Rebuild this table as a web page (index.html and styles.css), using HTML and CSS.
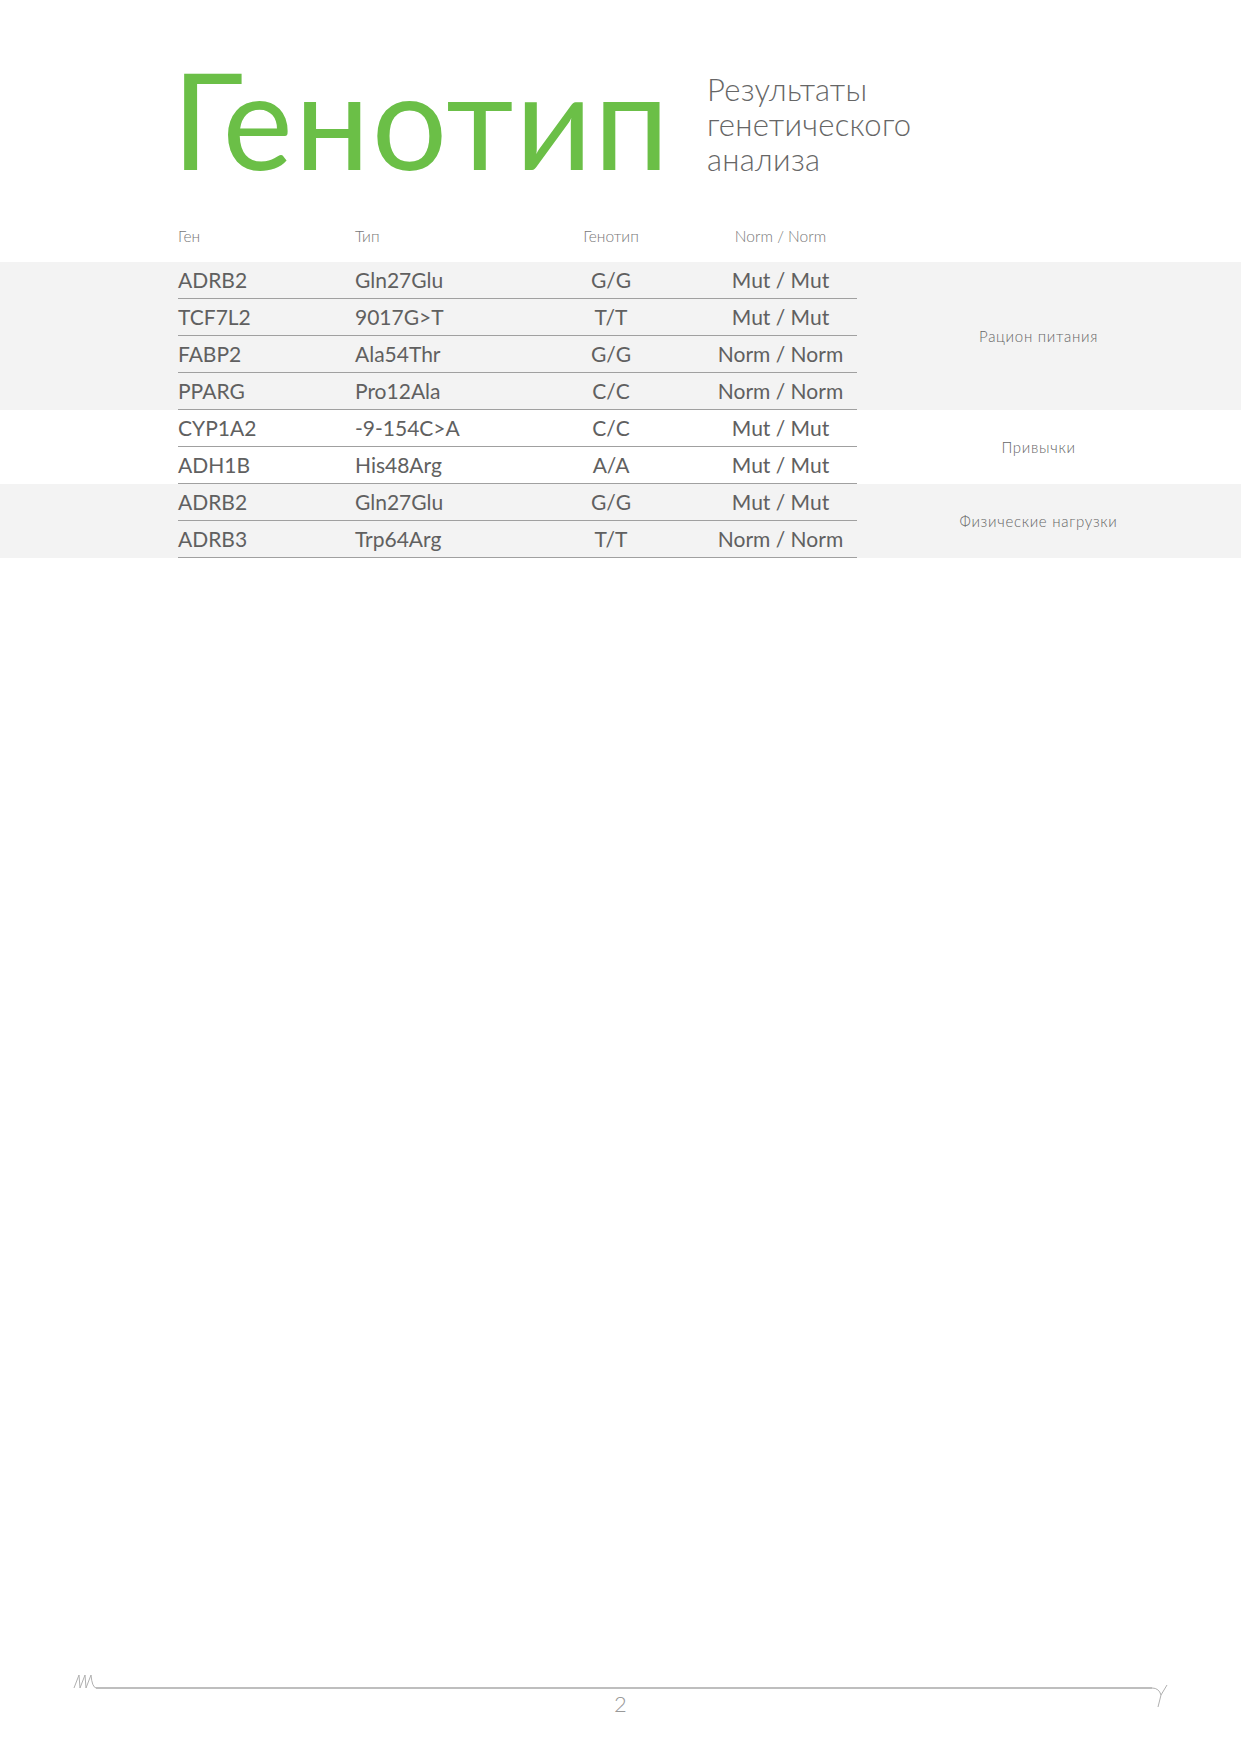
FILE: index.html
```html
<!DOCTYPE html>
<html lang="ru">
<head>
    <meta charset="UTF-8">
    <meta name="viewport" content="width=device-width, initial-scale=1.0">
    <title>Генотип</title>
    <link rel="stylesheet" href="styles.css">
</head>
<body>
    <header class="head">
        <h1 class="title">Генотип</h1>
        <p class="subtitle">Результаты<br>генетического<br>анализа</p>
    </header>

    <section class="table">
        <div class="table-head">
            <span>Ген</span>
            <span>Тип</span>
            <span class="center">Генотип</span>
            <span class="center">Norm / Norm</span>
        </div>

        <div class="group shaded">
            <div class="rows">
                <div class="row"><span>ADRB2</span><span>Gln27Glu</span><span class="center">G/G</span><span class="center">Mut / Mut</span></div>
                <div class="row"><span>TCF7L2</span><span>9017G&gt;T</span><span class="center">T/T</span><span class="center">Mut / Mut</span></div>
                <div class="row"><span>FABP2</span><span>Ala54Thr</span><span class="center">G/G</span><span class="center">Norm / Norm</span></div>
                <div class="row"><span>PPARG</span><span>Pro12Ala</span><span class="center">C/C</span><span class="center">Norm / Norm</span></div>
            </div>
            <div class="category">Рацион питания</div>
        </div>

        <div class="group">
            <div class="rows">
                <div class="row"><span>CYP1A2</span><span>-9-154C&gt;A</span><span class="center">C/C</span><span class="center">Mut / Mut</span></div>
                <div class="row"><span>ADH1B</span><span>His48Arg</span><span class="center">A/A</span><span class="center">Mut / Mut</span></div>
            </div>
            <div class="category">Привычки</div>
        </div>

        <div class="group shaded">
            <div class="rows">
                <div class="row"><span>ADRB2</span><span>Gln27Glu</span><span class="center">G/G</span><span class="center">Mut / Mut</span></div>
                <div class="row"><span>ADRB3</span><span>Trp64Arg</span><span class="center">T/T</span><span class="center">Norm / Norm</span></div>
            </div>
            <div class="category">Физические нагрузки</div>
        </div>
    </section>

    <footer class="foot">
        <svg class="foot-line" width="1241" height="45" viewBox="0 0 1241 45">
            <!-- left scribble -->
            <path d="M74 22 L79 9 L80 22 L85 9 L86 22 L91 9 Q92 21 96 22" fill="none" stroke="#b0b0b0" stroke-width="1"/>
            <line x1="96" y1="22" x2="1152" y2="22" stroke="#a9a9a9" stroke-width="1.5"/>
            <!-- right curl -->
            <path d="M1152 22 Q1159 22 1161 29 L1158 41 M1161 29 L1167 19" fill="none" stroke="#b0b0b0" stroke-width="1"/>
        </svg>
        <div class="page-num">2</div>
    </footer>
</body>
</html>
```

FILE: styles.css
```css
body {
    margin: 0;
    width: 1241px;
    min-height: 1754px;
    display: flex;
    flex-direction: column;
    font-family: "Lato", "Open Sans", sans-serif;
    color: #5a5a5a;
    background-color: #fff;
}
.head {
    display: flex;
    align-items: flex-start;
    padding: 52px 0 0 172px;
}
.title {
    margin: 0;
    font-size: 133px;
    line-height: 133px;
    font-weight: 400;
    letter-spacing: 2px;
    color: #6bbf47;
}
.subtitle {
    margin: 20px 0 0 36px;
    font-size: 31px;
    line-height: 35px;
    font-weight: 300;
    letter-spacing: 0.3px;
    color: #666;
}
.table {
    margin-top: 33px;
}
.table-head,
.row {
    display: grid;
    grid-template-columns: 177px 163px 186px 153px;
    align-items: center;
}
.table-head {
    width: 679px;
    height: 36px;
    margin: 0 0 8px 178px;
    font-size: 15.5px;
    font-weight: 300;
    color: #777;
}
.center {
    text-align: center;
}
.group {
    display: flex;
    padding-left: 178px;
}
.group.shaded {
    background-color: #f3f3f3;
}
.rows {
    width: 679px;
}
.row {
    height: 34px;
    padding-bottom: 2px;
    border-bottom: 1px solid #a0a0a0;
    font-size: 21px;
    color: #606060;
}
.category {
    width: 363px;
    display: flex;
    align-items: center;
    justify-content: center;
    font-size: 15px;
    font-weight: 300;
    letter-spacing: 0.7px;
    color: #666;
}
.foot {
    margin-top: auto;
    display: grid;
    padding-bottom: 38px;
}
.foot-line,
.page-num {
    grid-area: 1 / 1;
}
.page-num {
    justify-self: center;
    align-self: start;
    padding: 26px 0 0 0;
    font-size: 22px;
    line-height: 24px;
    font-weight: 300;
    color: #999;
}
```
